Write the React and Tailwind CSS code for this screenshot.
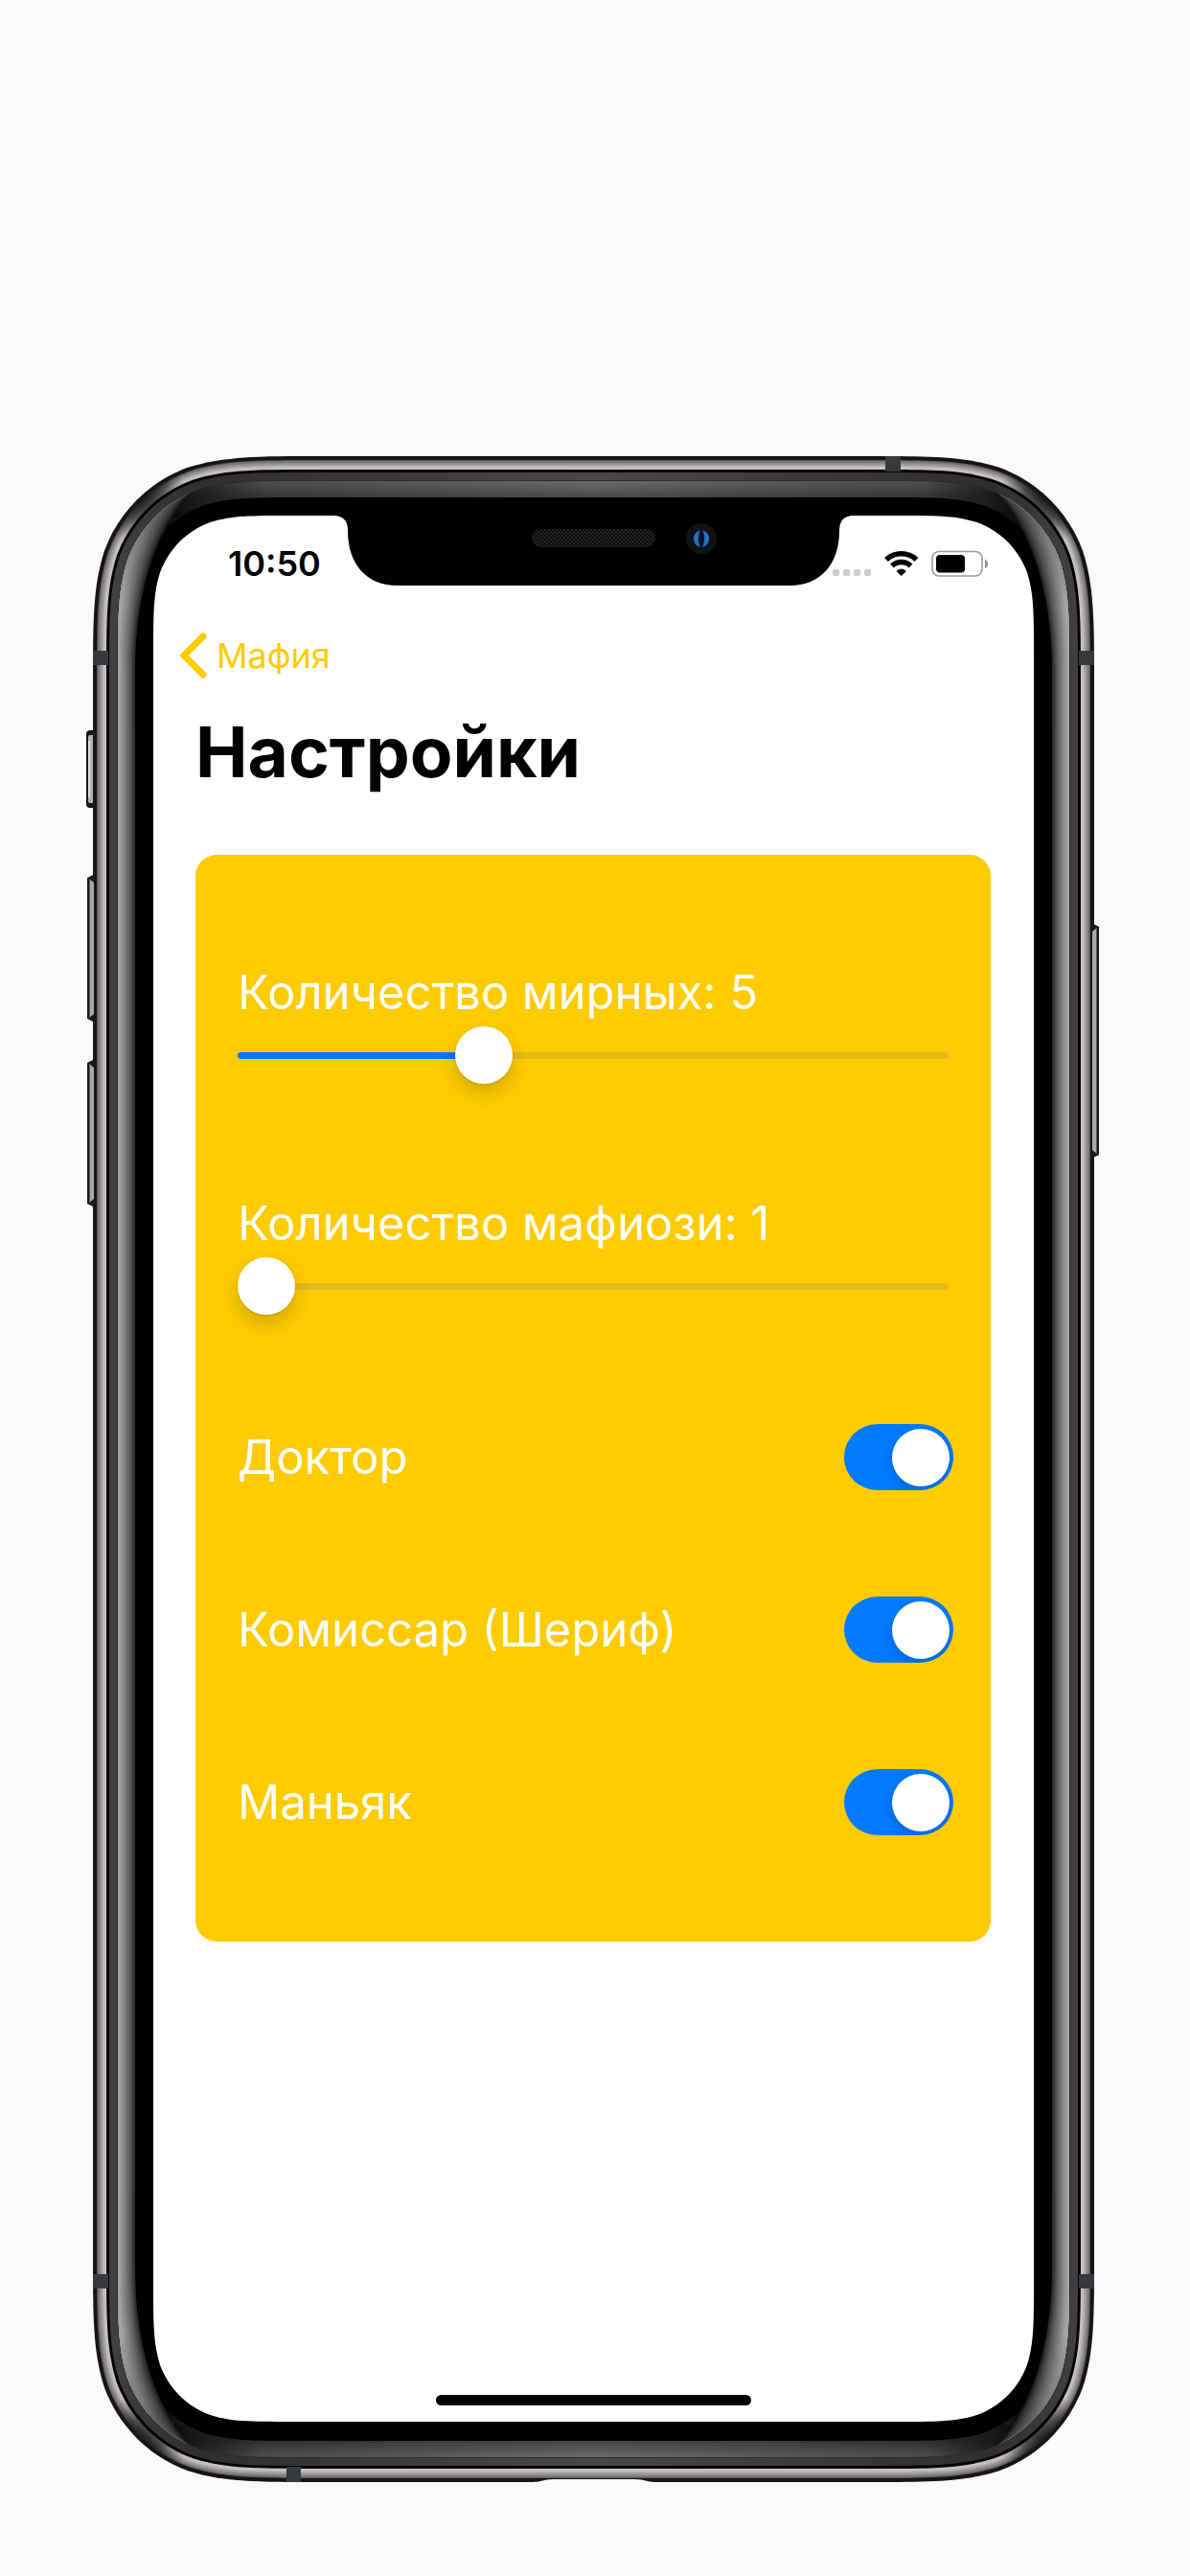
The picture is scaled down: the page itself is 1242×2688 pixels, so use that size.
import { useState } from "react";

/* Rounded rectangle with continuous-curvature corners. */
function squircle(x, y, w, h, r) {
  const a = 1.5287 * r, b = 1.0885 * r, c = 0.8684 * r;
  const d = 0.0749 * r, e = 0.6315 * r, f = 0.1691 * r, g = 0.3728 * r;
  const R = x + w, B = y + h;
  return [
    `M${x + a},${y}H${R - a}`,
    `C${R - b},${y} ${R - c},${y} ${R - e},${y + d}`,
    `C${R - g},${y + f} ${R - f},${y + g} ${R - d},${y + e}`,
    `C${R},${y + c} ${R},${y + b} ${R},${y + a}V${B - a}`,
    `C${R},${B - b} ${R},${B - c} ${R - d},${B - e}`,
    `C${R - f},${B - g} ${R - g},${B - f} ${R - e},${B - d}`,
    `C${R - c},${B} ${R - b},${B} ${R - a},${B}H${x + a}`,
    `C${x + b},${B} ${x + c},${B} ${x + e},${B - d}`,
    `C${x + g},${B - f} ${x + f},${B - g} ${x + d},${B - e}`,
    `C${x},${B - c} ${x},${B - b} ${x},${B - a}V${y + a}`,
    `C${x},${y + b} ${x},${y + c} ${x + d},${y + e}`,
    `C${x + f},${y + g} ${x + g},${y + f} ${x + e},${y + d}`,
    `C${x + c},${y} ${x + b},${y} ${x + a},${y}Z`,
  ].join("");
}

const ring = (i) => squircle(97 + i, 476 + i, 1045 - 2 * i, 2114 - 2 * i, 157 - i);

const RAIL = [
  [4, "#5a5859"], [5, "#757273"], [6, "#827f80"], [7, "#8f8b8c"], [8, "#9a9698"],
  [9, "#a6a2a4"], [10, "#b2aeb0"], [11, "#c2bec0"], [13, "#c8c4c6"], [14, "#090809"],
];

/* Left-hand reflection, tapering to a point in both corners. */
function reflection(k) {
  const x = 141 - 18 * k;
  const c = 168 - 26 * k;
  const m = 141 - 20 * k;
  return `M100,480L198,514C${c},${548 - 6 * k} ${m},${606 - 14 * k} ${x},700V2366C${m},${2460 + 14 * k} ${c},${2518 + 6 * k} 198,2552L100,2586Z`;
}
const SHADES = ["#2c2c2c", "#404040", "#525252", "#616161", "#6e6e6e", "#7a7a7a", "#868686", "#919191", "#9b9b9b", "#a5a5a5"];

function Reflection() {
  return (
    <>
      {SHADES.map((s, i) => <path key={s} d={reflection(i / 10)} fill={s} />)}
      <path d={reflection(0)} fill="url(#taper)" />
    </>
  );
}

function SideButton({ x, y, h, flip }) {
  return (
    <g transform={flip ? `translate(${2 * x + 9} 0) scale(-1 1)` : undefined}>
      <path d={`M${x + 9},${y}L${x + 1},${y + 4}V${y + h - 4}L${x + 9},${y + h}Z`} fill="#1b1a1b" />
      <path d={`M${x + 3},${y + 5}L${x + 8},${y + 9}V${y + h - 9}L${x + 3},${y + h - 5}Z`} fill="#aaa8a9" />
      <rect x={x + 3} y={y + 5} width="1" height={h - 10} fill="#5a595a" />
    </g>
  );
}

function PhoneFrame() {
  return (
    <svg className="absolute inset-0 h-full w-full" viewBox="90 476 1058 2114" preserveAspectRatio="none" aria-hidden="true">
      <defs>
        <radialGradient id="dim">
          <stop offset="0" stopColor="#0c090a" stopOpacity="0.8" />
          <stop offset="0.45" stopColor="#0c090a" stopOpacity="0.6" />
          <stop offset="1" stopColor="#0c090a" stopOpacity="0" />
        </radialGradient>
        <linearGradient id="inner" gradientUnits="userSpaceOnUse" x1="113" x2="1126" y1="0" y2="0">
          <stop offset="0" stopColor="#414141" />
          <stop offset="0.09" stopColor="#2f2f2f" />
          <stop offset="0.5" stopColor="#474747" />
          <stop offset="0.91" stopColor="#2f2f2f" />
          <stop offset="1" stopColor="#414141" />
        </linearGradient>
        <linearGradient id="band" gradientUnits="userSpaceOnUse" x1="165" x2="1074" y1="0" y2="0">
          <stop offset="0" stopColor="#000" />
          <stop offset="0.04" stopColor="#242424" />
          <stop offset="0.12" stopColor="#4d4d4d" />
          <stop offset="0.5" stopColor="#6c6c6c" />
          <stop offset="0.88" stopColor="#4d4d4d" />
          <stop offset="0.96" stopColor="#242424" />
          <stop offset="1" stopColor="#000" />
        </linearGradient>
        <linearGradient id="taper" gradientUnits="userSpaceOnUse" x1="0" x2="0" y1="510" y2="2556">
          <stop offset="0" stopColor="#000" stopOpacity="0.65" />
          <stop offset="0.025" stopColor="#000" stopOpacity="0.25" />
          <stop offset="0.06" stopColor="#000" stopOpacity="0" />
          <stop offset="0.94" stopColor="#000" stopOpacity="0" />
          <stop offset="0.975" stopColor="#000" stopOpacity="0.25" />
          <stop offset="1" stopColor="#000" stopOpacity="0.65" />
        </linearGradient>
        <linearGradient id="shadeTop" gradientUnits="userSpaceOnUse" x1="0" x2="0" y1="502" y2="519">
          <stop offset="0" stopColor="#000" stopOpacity="0" />
          <stop offset="1" stopColor="#000" stopOpacity="0.32" />
        </linearGradient>
        <linearGradient id="shadeBottom" gradientUnits="userSpaceOnUse" x1="0" x2="0" y1="2564" y2="2547">
          <stop offset="0" stopColor="#000" stopOpacity="0" />
          <stop offset="1" stopColor="#000" stopOpacity="0.36" />
        </linearGradient>
        <pattern id="mesh" width="4" height="4" patternUnits="userSpaceOnUse">
          <rect width="4" height="4" fill="#0b0b0b" />
          <rect width="2" height="2" fill="#222" />
          <rect x="2" y="2" width="2" height="2" fill="#222" />
        </pattern>
        <clipPath id="bandClip"><path d={ring(26)} /></clipPath>
        <clipPath id="railClip"><path d={ring(4)} /></clipPath>
      </defs>

      <rect x="90" y="762" width="14" height="81" rx="4" fill="#171617" />
      <rect x="92" y="767" width="6" height="71" rx="2" fill="#b4b2b3" />
      <rect x="92" y="773" width="2" height="59" fill="#e2e0e1" />

      <path d={ring(0)} fill="#161416" />
      {RAIL.map(([i, c]) => <path key={i} d={ring(i)} fill={c} />)}
      <g clipPath="url(#railClip)">
        <circle cx="148" cy="520" r="48" fill="url(#dim)" />
        <circle cx="1091" cy="520" r="48" fill="url(#dim)" />
        <circle cx="148" cy="2546" r="48" fill="url(#dim)" />
        <circle cx="1091" cy="2546" r="48" fill="url(#dim)" />
      </g>
      <path d={ring(15)} fill="#050505" />
      <path d={ring(17)} fill="url(#inner)" />
      <path d={ring(25)} fill="#2b2b2b" />

      <path d={ring(26)} fill="url(#band)" />
      <g clipPath="url(#bandClip)">
        <rect x="110" y="500" width="1020" height="40" fill="url(#shadeTop)" />
        <rect x="110" y="2530" width="1020" height="40" fill="url(#shadeBottom)" />
      </g>
      <path d={ring(43)} fill="#000" />
      <g clipPath="url(#bandClip)">
        <Reflection />
        <g transform="translate(1239 0) scale(-1 1)"><Reflection /></g>
      </g>

      <SideButton x={90} y={912} h={155} />
      <SideButton x={90} y={1105} h={155} />
      <SideButton x={1139} y={963} h={246} flip />

      <g fill="#363a3f">
        <rect x="97" y="679" width="16" height="15" />
        <rect x="1126" y="679" width="16" height="15" />
        <rect x="97" y="2373" width="16" height="15" />
        <rect x="1126" y="2373" width="16" height="15" />
        <rect x="924" y="476" width="16" height="16" />
        <rect x="299" y="2574" width="15" height="16" />
      </g>
      <path d="M556,2590C566,2590 566,2587 578,2587H662C674,2587 674,2590 684,2590Z" fill="#fafafa" />

      <path d={squircle(160, 538, 919, 1989, 94)} fill="#fff" />
      <path d="M348,537V538C358,538 363,543 363,554C363,588 382,611 415,611H824C857,611 876,588 876,554C876,543 881,538 891,538V537Z" fill="#000" />
      <rect x="555" y="552" width="129" height="19" rx="9" fill="url(#mesh)" />
      <circle cx="732" cy="562" r="16" fill="#111214" />
      <circle cx="732" cy="562" r="9" fill="#0a1030" />
      <path d="M729,555A8,8 0 0 0 729,569Q727,562 729,555Z" fill="#2f7fc4" stroke="#2a6fb0" strokeWidth="2" />
      <path d="M735,555A8,8 0 0 1 735,569Q737,562 735,555Z" fill="#2f7fc4" stroke="#2a6fb0" strokeWidth="2" />
    </svg>
  );
}

function StatusIcons() {
  return (
    <svg width="164" height="28" viewBox="868 573 164 28" aria-hidden="true">
      <g fill="#ccc">
        <rect x="869" y="593" width="7" height="7" rx="2" />
        <rect x="880" y="593" width="7" height="7" rx="2" />
        <rect x="891" y="593" width="7" height="7" rx="2" />
        <rect x="902" y="593" width="7" height="7" rx="2" />
      </g>
      <g fill="none" stroke="#000" strokeWidth="5.5">
        <path d="M925,583A23,23 0 0 1 956.500,583" />
        <path d="M931,589.500A14,14 0 0 1 950.500,589.500" />
      </g>
      <path d="M935.500,595Q940.700,590 946,595L940.700,600Z" />
      <rect x="973" y="574.500" width="52" height="25.500" rx="7" fill="none" stroke="#9b9b9b" strokeWidth="1.600" />
      <rect x="977" y="578" width="30" height="18.500" rx="4" />
      <path d="M1028,582.500Q1031,584 1031,587.500Q1031,591 1028,592Z" fill="#8d8d8d" />
    </svg>
  );
}

function CountSlider({ id, label, value, min, max, onChange }) {
  const share = (value - min) / (max - min);
  const fill = `calc(30px + (100% - 60px) * ${share})`;
  return (
    <div className="flex flex-col">
      <label htmlFor={id} className="text-[49px] leading-[60px]">{label}: {value}</label>
      <input
        id={id}
        type="range"
        min={min}
        max={max}
        value={value}
        onChange={(e) => onChange(Number(e.target.value))}
        style={{ "--fill": fill }}
        className="mt-[5px] block h-[60px] w-full cursor-pointer appearance-none bg-transparent [&::-webkit-slider-runnable-track]:h-[7px] [&::-webkit-slider-runnable-track]:rounded-full [&::-webkit-slider-runnable-track]:bg-[linear-gradient(to_right,#007aff_var(--fill),#e4bb1c_var(--fill))] [&::-webkit-slider-thumb]:-mt-[27px] [&::-webkit-slider-thumb]:size-[60px] [&::-webkit-slider-thumb]:appearance-none [&::-webkit-slider-thumb]:rounded-full [&::-webkit-slider-thumb]:bg-white [&::-webkit-slider-thumb]:shadow-[0_9px_20px_rgba(0,0,0,0.18),0_1px_2px_rgba(0,0,0,0.1)]"
      />
    </div>
  );
}

function RoleSwitch({ id, label, checked, onChange }) {
  return (
    <div className="-mr-[5px] flex h-[69px] items-center justify-between">
      <label htmlFor={id} className="text-[49px] leading-[60px]">{label}</label>
      <input
        id={id}
        type="checkbox"
        role="switch"
        checked={checked}
        onChange={(e) => onChange(e.target.checked)}
        className="flex h-[69px] w-[114px] shrink-0 cursor-pointer appearance-none items-center overflow-hidden rounded-full bg-[#e4bb1c] px-1 before:size-[60px] before:rounded-full before:bg-white before:shadow-[0_5px_14px_rgba(0,0,0,0.18)] before:content-[''] checked:justify-end checked:bg-[#007aff]"
      />
    </div>
  );
}

export default function App() {
  const [peaceful, setPeaceful] = useState(5);
  const [mafia, setMafia] = useState(1);
  const [roles, setRoles] = useState({ doctor: true, sheriff: true, maniac: true });
  const setRole = (key) => (on) => setRoles((r) => ({ ...r, [key]: on }));

  return (
    <main className="min-h-screen bg-[#fafafa] pt-[476px] pr-[94px] pb-[98px] pl-[90px] font-['Inter','Liberation_Sans',sans-serif]">
      <div className="relative pt-[62px] pr-[69px] pb-[63px] pl-[70px]">
        <PhoneFrame />
        <section className="relative flex min-h-[1989px] flex-col">
          <div className="flex items-center justify-between pt-7 pr-[47px] pl-[78px]">
            <time className="text-[36px] leading-[44px] font-semibold">10:50</time>
            <StatusIcons />
          </div>
          <nav className="mt-[50px] pl-7">
            <button type="button" className="flex items-center gap-2.5 text-[36px] leading-[48px] text-[#ffcc02]">
              <svg width="28" height="48" viewBox="0 0 28 48" fill="none" stroke="currentColor" strokeWidth="7" strokeLinecap="round" strokeLinejoin="round" aria-hidden="true">
                <path d="M24 4L4 24L24 44" />
              </svg>
              Мафия
            </button>
          </nav>
          <h1 className="mt-8 pl-11 text-[73px] leading-[90px] font-bold">Настройки</h1>
          <div className="mt-[62px] mr-[45px] ml-11 flex flex-col rounded-[22px] bg-[#ffcc02] px-11 pt-[114px] pb-[111px] text-white">
            <div className="flex flex-col gap-[116px]">
              <CountSlider id="peaceful" label="Количество мирных" value={peaceful} min={2} max={11} onChange={setPeaceful} />
              <CountSlider id="mafia" label="Количество мафиози" value={mafia} min={1} max={5} onChange={setMafia} />
            </div>
            <div className="mt-[114px] flex flex-col gap-[111px]">
              <RoleSwitch id="doctor" label="Доктор" checked={roles.doctor} onChange={setRole("doctor")} />
              <RoleSwitch id="sheriff" label="Комиссар (Шериф)" checked={roles.sheriff} onChange={setRole("sheriff")} />
              <RoleSwitch id="maniac" label="Маньяк" checked={roles.maniac} onChange={setRole("maniac")} />
            </div>
          </div>
          <div className="mx-auto mt-auto mb-[17px] h-[11px] w-[329px] rounded-full bg-black" />
        </section>
      </div>
    </main>
  );
}
